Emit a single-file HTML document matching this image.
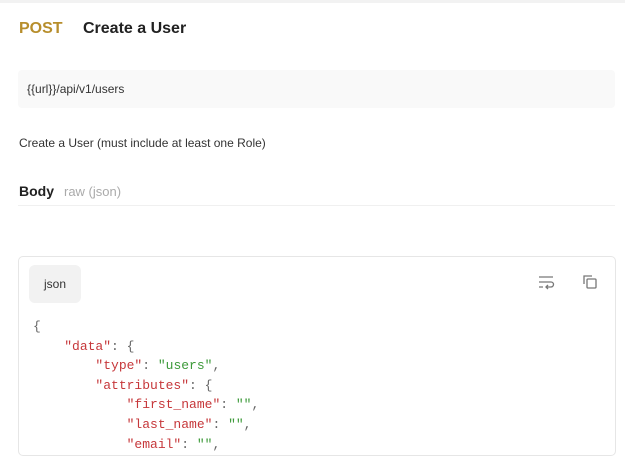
<!DOCTYPE html>
<html><head><meta charset="utf-8"><style>
*{margin:0;padding:0;box-sizing:border-box}
body{width:625px;height:445px;overflow:hidden;background:#fff;font-family:"Liberation Sans",sans-serif;color:#212121;position:relative}
.top{position:absolute;left:0;top:0;width:625px;height:3px;background:#f2f2f2}
.t{position:absolute;white-space:nowrap}
.url{position:absolute;left:18px;top:70px;width:597px;height:38px;background:#f9f9f9;border-radius:4px}
.sep{position:absolute;left:18px;top:205px;width:597px;height:1px;background:#f0f0f0}
.box{position:absolute;left:18px;top:256px;width:598px;height:200px;border:1px solid #e6e6e6;border-radius:5px}
.badge{position:absolute;left:29px;top:265px;width:52px;height:38px;background:#f2f2f2;border-radius:6px;font-size:12px;color:#333;text-align:center;line-height:38px}
.code{position:absolute;left:33px;top:317px;font-family:"Liberation Mono",monospace;font-size:13px;line-height:19.6px;color:#666;white-space:pre}
.k{color:#c6373a}.s{color:#3d9a3a}
</style></head><body>
<div class="top"></div>
<div class="t" style="left:19px;top:20px;font-size:16px;font-weight:bold;color:#b78e2c">POST</div>
<div class="t" style="left:83px;top:20px;font-size:16px;font-weight:bold;color:#212121">Create a User</div>
<div class="url"></div>
<div class="t" style="left:27px;top:82px;font-size:12px;color:#333">{{url}}/api/v1/users</div>
<div class="t" style="left:19px;top:136px;font-size:12px;color:#333">Create a User (must include at least one Role)</div>
<div class="t" style="left:19px;top:183px;font-size:14px;font-weight:bold;color:#212121">Body</div>
<div class="t" style="left:64px;top:184px;font-size:13px;color:#aaa">raw (json)</div>
<div class="sep"></div>
<div class="box"></div>
<div class="badge">json</div>
<svg style="position:absolute;left:537px;top:274px" width="18" height="16" viewBox="0 0 18 16" fill="none" stroke="#777" stroke-width="1.3"><path d="M2 3h14M2 8h12a2.5 2.5 0 0 1 0 5H9M2 13h4M11 11l-2 2 2 2"/></svg>
<svg style="position:absolute;left:581px;top:273px" width="18" height="18" viewBox="0 0 18 18" fill="none" stroke="#777" stroke-width="1.3"><path d="M3 11V3h8"/><rect x="6" y="6" width="9" height="9" rx="1"/></svg>
<div class="code">{
    <span class="k">"data"</span>: {
        <span class="k">"type"</span>: <span class="s">"users"</span>,
        <span class="k">"attributes"</span>: {
            <span class="k">"first_name"</span>: <span class="s">""</span>,
            <span class="k">"last_name"</span>: <span class="s">""</span>,
            <span class="k">"email"</span>: <span class="s">""</span>,</div>
</body></html>
